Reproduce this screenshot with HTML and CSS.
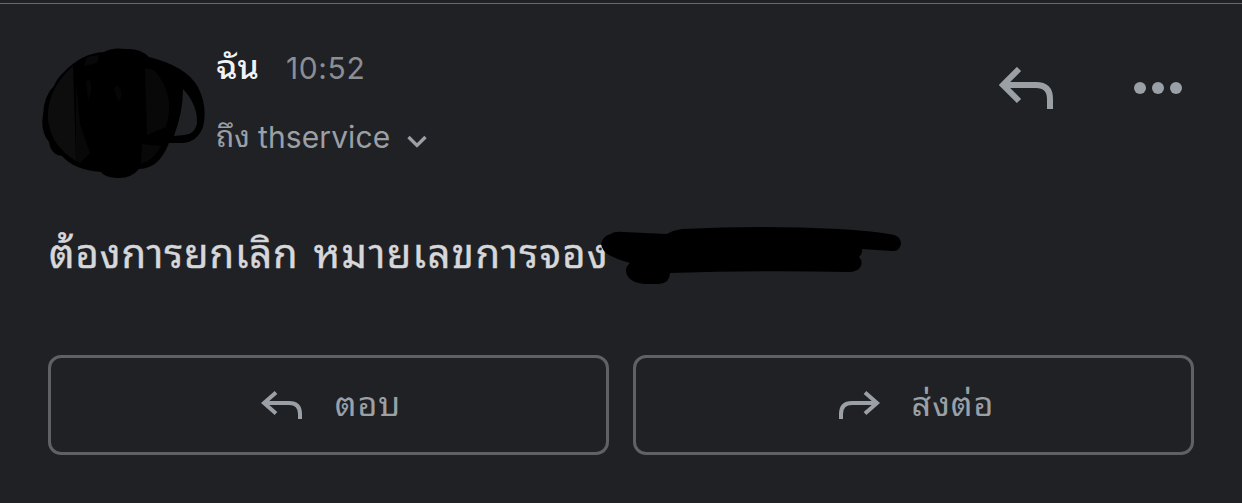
FILE: index.html
```
<!DOCTYPE html>
<html lang="th">

<head>
    <meta charset="UTF-8">
    <meta name="viewport" content="width=device-width, initial-scale=1.0">
    <title>thservice</title>
    <link rel="stylesheet" href="styles.css">
</head>

<body>
    <article class="message">
        <header class="message-header">
            <svg class="avatar" viewBox="0 0 166 134" aria-hidden="true">
                <path d="M22 24Q40 5 62 4Q70 -1 84 1Q98 0 107 9Q144 18 156 39Q166 59 161 79Q155 94 141 95L127 95Q117 121 97 121Q89 131 74 130Q62 129 59 124Q32 122 20 108Q9 107 7 94Q-2 83 1 67Q2 47 12 38Q15 30 22 24Z" fill="#000" />
                <path d="M141 41Q156 57 155 76Q152 87 142 87L132 88Q141 64 141 41Z" fill="#202124" />
                <path d="M31 18Q4 42 6 72Q9 98 34 113Z" fill="#0d0d0e" />
                <path d="M45 9L57 7L55 15L42 18ZM34 35L38 76L48 105L38 115L34 112ZM103 20L112 22Q134 46 124 79L105 87ZM100 96L119 98Q112 112 99 116Z" fill="#080809" />
                <path d="M44 34Q50 26 49 45L46 52ZM72 42Q75 34 79 42Q81 51 76 53Z" fill="#060607" />
            </svg>
            <div class="sender">
                <div class="sender-line">
                    <span class="name">ฉัน</span>
                    <time class="time">10:52</time>
                </div>
                <div class="recipient">
                    <span class="to">ถึง</span>
                    <span class="address">thservice</span>
                    <svg class="chevron" viewBox="0 0 20 14"><path d="M1.5 2L10 10.5L18.5 2" /></svg>
                </div>
            </div>
            <div class="actions">
                <svg class="icon-reply" viewBox="0 0 54 42"><path d="M20 2L4 18L20 34M4 18H37Q51 18 51 32V42" /></svg>
                <svg class="icon-more" viewBox="0 0 48 12"><circle cx="6" cy="6" r="6" /><circle cx="24" cy="6" r="6" /><circle cx="42" cy="6" r="6" /></svg>
            </div>
        </header>
        <div class="message-body">
            <p>ต้องการยกเลิก <span>หมายเลขการจอง</span></p>
            <svg class="redaction" viewBox="0 0 300 58" aria-hidden="true">
                <path d="M0 16Q3 8 10 7Q13 4 23 5L66 7Q72 3 82 2Q160 -2 238 2Q270 4 288 7Q300 8 300 17Q298 25 291 24L261 22Q262 26 258 30Q262 34 260 39Q257 45 247 45Q160 43 69 46Q69 56 58 57L43 57Q26 55 25 44Q25 39 29 36Q8 30 3 24Q0 20 0 16Z" />
            </svg>
        </div>
        <div class="buttons">
            <button type="button">
                <svg viewBox="0 0 42 28"><path d="M15 1.5L3 12L15 22.5M3 12H28Q39 12 39 23V28" /></svg>
                <span class="label">ตอบ</span>
            </button>
            <button type="button">
                <svg viewBox="0 0 42 28"><path d="M27 1.5L39 12L27 22.5M39 12H14Q3 12 3 23V28" /></svg>
                <span class="label">ส่งต่อ</span>
            </button>
        </div>
    </article>
</body>

</html>
```

FILE: styles.css
```
* {
    box-sizing: border-box;
}

body {
    margin: 0;
    padding-top: 3px;
    background-color: #202124;
    color: #9aa0a6;
    font-family: Inter, Thonburi, "Noto Sans Thai Looped", Loma, Garuda, Waree, Umpush, "Noto Sans Thai", sans-serif;
}

svg {
    display: block;
    flex: none;
}

.message {
    height: 500px;
    padding: 44px 48px 0 48px;
    border-top: 1px solid #68696c;
}

.message-header {
    display: flex;
    height: 132px;
    margin-left: -6px;
}

.avatar {
    width: 166px;
    height: 134px;
}

.sender {
    margin-left: 8px;
}

.sender-line,
.recipient {
    display: flex;
    align-items: center;
    height: 40px;
    font-size: 30px;
    white-space: nowrap;
}

.recipient {
    margin-top: 29px;
}

.name {
    width: 70px;
    padding-bottom: 9px;
    color: #f1f2f4;
    font-size: 34px;
    font-weight: 500;
}

.time {
    color: #8b8e93;
    letter-spacing: 0.6px;
}

.to {
    width: 42px;
    padding-bottom: 7px;
}

.address {
    letter-spacing: 0.1px;
}

.chevron {
    width: 20px;
    height: 14px;
    margin: 10px 0 0 17px;
}

.chevron path,
.icon-reply path,
button path {
    fill: none;
    stroke: #9aa0a6;
    stroke-width: 4;
}

.chevron path {
    stroke-width: 3.3;
}

.actions {
    display: flex;
    align-items: center;
    gap: 80px;
    height: 80px;
    margin-left: auto;
    padding-right: 12px;
}

.icon-reply {
    width: 54px;
    height: 42px;
    margin-right: 1px;
}

.icon-reply path {
    stroke-width: 6;
}

.icon-more {
    width: 48px;
    height: 12px;
    fill: #9aa0a6;
}

.message-body {
    display: flex;
    position: relative;
    align-items: center;
    height: 60px;
    margin-top: 44px;
    color: #d6d7da;
    font-size: 40px;
    letter-spacing: 0.9px;
    white-space: nowrap;
    -webkit-text-stroke: 0.4px #d6d7da;
}

.message-body p {
    margin: 0 0 9px 1px;
}

.message-body span {
    margin-left: 3px;
    letter-spacing: 1.4px;
}

/* hand-drawn marker over the booking number */
.redaction {
    position: absolute;
    top: 3px;
    left: 553px;
    width: 300px;
    height: 58px;
}

.buttons {
    display: grid;
    grid-template-columns: 1fr 1fr;
    gap: 24px;
    margin-top: 71px;
}

button {
    display: flex;
    align-items: center;
    justify-content: center;
    gap: 32px;
    height: 100px;
    padding: 0 0 0 5px;
    border: 3px solid #5f6164;
    border-radius: 13px;
    background: none;
    color: #9aa0a6;
    font: inherit;
    font-size: 34px;
}

button svg {
    width: 42px;
    height: 28px;
}

.label {
    padding-bottom: 10px;
    letter-spacing: 1px;
}
```
